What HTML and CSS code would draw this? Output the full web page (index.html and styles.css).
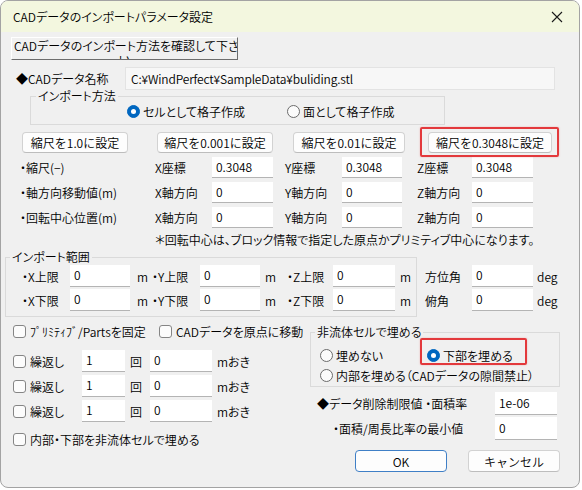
FILE: index.html
```html
<!DOCTYPE html>
<html lang="ja">
<head>
<meta charset="utf-8">
<title>CADデータのインポートパラメータ設定</title>
<link rel="stylesheet" href="styles.css">
</head>
<body>
<div class="dialog">
  <div class="titlebar">
    <span class="title">CADデータのインポートパラメータ設定</span>
    <svg class="close" width="12" height="12" viewBox="0 0 12 12"><path d="M1 1L11 11M11 1L1 11" stroke="#1a1a1a" stroke-width="1.1" fill="none"/></svg>
  </div>
  <div class="client">
    <div class="classic" role="button">CADデータのインポート方法を確認して下さ<br>い</div>

    <div class="name-row">
      <span class="name-lbl">◆CADデータ名称</span>
      <div class="readonly">C:¥WindPerfect¥SampleData¥buliding.stl</div>
    </div>

    <fieldset class="method">
      <legend>インポート方法</legend>
      <div class="radio-line">
        <label class="radio r-cell"><span class="rb on"></span>セルとして格子作成</label>
        <label class="radio"><span class="rb"></span>面として格子作成</label>
      </div>
    </fieldset>

    <div class="btn-row">
      <button class="btn b1">縮尺を1.0に設定</button>
      <button class="btn b2">縮尺を0.001に設定</button>
      <button class="btn b3">縮尺を0.01に設定</button>
      <div class="hl"><button class="btn b4">縮尺を0.3048に設定</button></div>
    </div>

    <div class="xyz">
      <span>・縮尺(−)</span><span>X座標</span><input class="edit" value="0.3048"><span class="yl">Y座標</span><input class="edit" value="0.3048"><span class="zl">Z座標</span><input class="edit" value="0.3048">
      <span>・軸方向移動値(m)</span><span>X軸方向</span><input class="edit" value="0"><span class="yl">Y軸方向</span><input class="edit" value="0"><span class="zl">Z軸方向</span><input class="edit" value="0">
      <span>・回転中心位置(m)</span><span>X軸方向</span><input class="edit" value="0"><span class="yl">Y軸方向</span><input class="edit" value="0"><span class="zl">Z軸方向</span><input class="edit" value="0">
    </div>

    <p class="note">＊回転中心は、ブロック情報で指定した原点かプリミティブ中心になります。</p>

    <div class="range-row">
      <fieldset class="range">
        <legend>インポート範囲</legend>
        <div class="range-grid">
          <span>・X上限</span><input class="edit" value="0"><span class="unit">m</span>
          <span>・Y上限</span><input class="edit" value="0"><span class="unit2">m</span>
          <span>・Z上限</span><input class="edit" value="0"><span class="unit2">m</span>
          <span>・X下限</span><input class="edit" value="0"><span class="unit">m</span>
          <span>・Y下限</span><input class="edit" value="0"><span class="unit2">m</span>
          <span>・Z下限</span><input class="edit" value="0"><span class="unit2">m</span>
        </div>
      </fieldset>
      <div class="angles">
        <span>方位角</span><input class="edit" value="0"><span class="deg">deg</span>
        <span>俯角</span><input class="edit" value="0"><span class="deg">deg</span>
      </div>
    </div>

    <div class="lower">
      <div class="left">
        <div class="cb-row">
          <label class="check c1"><span class="cb"></span>ﾌﾟﾘﾐﾃｨﾌﾞ/Partsを固定</label>
          <label class="check c2"><span class="cb"></span>CADデータを原点に移動</label>
        </div>
        <div class="rep">
          <label class="check"><span class="cb"></span>繰返し</label><input class="edit" value="1"><span class="kai">回</span><input class="edit" value="0"><span class="unit">mおき</span>
          <label class="check"><span class="cb"></span>繰返し</label><input class="edit" value="1"><span class="kai">回</span><input class="edit" value="0"><span class="unit">mおき</span>
          <label class="check"><span class="cb"></span>繰返し</label><input class="edit" value="1"><span class="kai">回</span><input class="edit" value="0"><span class="unit">mおき</span>
        </div>
        <label class="check last"><span class="cb"></span>内部・下部を非流体セルで埋める</label>
      </div>

      <div class="right">
        <fieldset class="nonfluid">
          <legend>非流体セルで埋める</legend>
          <div class="radio-line nf1">
            <label class="radio r-none"><span class="rb"></span>埋めない</label>
            <label class="radio r-bottom"><span class="rb on"></span>下部を埋める</label>
          </div>
          <div class="radio-line nf2">
            <label class="radio"><span class="rb"></span>内部を埋める（CADデータの隙間禁止）</label>
          </div>
        </fieldset>
        <div class="del">
          <span class="d1">◆データ削除制限値 ・面積率</span><input class="edit" value="1e-06">
          <span class="d2">・面積/周長比率の最小値</span><input class="edit" value="0">
        </div>
        <div class="dlg-btns">
          <button class="btn ok">OK</button>
          <button class="btn cancel">キャンセル</button>
        </div>
      </div>
    </div>
  </div>
</div>
</body>
</html>
```
FILE: styles.css
```css
* { box-sizing: border-box; }
html, body { margin: 0; padding: 0; background: #ffffff; }
body {
  font-family: "Noto Sans CJK JP", "Noto Sans", sans-serif;
  font-size: 12px;
  font-weight: 350;
  color: #000;
  font-feature-settings: "palt";
}
.dialog {
  width: 580px;
  height: 488px;
  border: 1px solid #a3a3a3;
  border-radius: 8px;
  overflow: hidden;
  display: flex;
  flex-direction: column;
  background: #f0f0f0;
}
.titlebar {
  height: 31px;
  flex: none;
  background: #f3f7df;
  display: flex;
  align-items: center;
  padding-left: 12px;
}
.close { margin-left: auto; margin-right: 16px; }
.client { flex: 1; }

.classic {
  margin: 5px 0 0 10px;
  width: 227px;
  height: 23px;
  padding: 1px 2px 0;
  border: 1px solid;
  border-color: #ffffff #6d6d6d #6d6d6d #ffffff;
  background: #f0f0f0;
  line-height: 14px;
  text-align: center;
  overflow: hidden;
  white-space: nowrap;
}

.name-row { display: flex; align-items: center; margin: 7px 0 0 15px; height: 23px; }
.name-lbl { width: 109px; }
.readonly {
  width: 430px;
  height: 23px;
  background: #f7f7f7;
  border: 1px solid #e3e3e3;
  padding-left: 5px;
  line-height: 21px;
  white-space: nowrap;
  letter-spacing: -0.15px;
}

fieldset { border: 1px solid #dadada; margin: 0; padding: 0; min-width: 0; }
legend { line-height: 14px; padding: 0 2px; }

.method { margin: -1px 0 0 29px; width: 415px; padding-bottom: 5px; }
.method legend { margin-left: 5px; }
.radio-line { display: flex; height: 16px; align-items: center; }
.method .radio-line { padding-left: 96px; }
.radio { display: inline-flex; align-items: center; white-space: nowrap; height: 16px; }
.r-cell { width: 160px; }
.rb {
  width: 13px; height: 13px; flex: none;
  border: 1px solid #6b6b6b;
  border-radius: 50%;
  background: #fbfbfb;
  margin-right: 3px;
  position: relative;
}
.rb.on { background: #0067c0; border-color: #0067c0; }
.rb.on::after {
  content: ""; position: absolute; left: 3px; top: 3px; width: 5px; height: 5px;
  border-radius: 50%; background: #fff;
}

.btn-row { display: flex; margin-top: 7px; height: 21px; }
.btn {
  height: 21px;
  background: #fdfdfd;
  border: 1px solid #d2d2d2;
  border-bottom-color: #bdbdbd;
  border-radius: 4px;
  font-family: inherit;
  font-size: 12px;
  font-weight: 350;
  color: #000;
  padding: 0;
  line-height: 19px;
  white-space: nowrap;
}
.b1 { margin-left: 21px; width: 106px; }
.b2 { margin-left: 29px; width: 116px; }
.b3 { margin-left: 20px; width: 112px; }
.hl { margin-left: 23px; position: relative; display: flex; }
.b4 { width: 124px; }
.hl::after {
  content: ""; position: absolute; left: -8px; right: -7px; top: -5px; bottom: -4px;
  border: 2px solid #e3393c; border-radius: 2px;
  box-shadow: 0 0 2px rgba(227,57,60,0.35);
}

.edit {
  width: 100%;
  height: 100%;
  align-self: stretch;
  border: none;
  border-bottom: 1px solid #b4b4b4;
  background: #fff;
  font-family: inherit;
  font-size: 12px;
  font-weight: 350;
  color: #000;
  padding: 0 0 2px 4px;
  margin: 0;
  outline: none;
}

.xyz {
  display: grid;
  grid-template-columns: 135px 57px 61px 69px 60px 70px 61px;
  grid-auto-rows: 21px;
  row-gap: 4px;
  margin: 4px 0 0 19px;
  align-items: center;
  white-space: nowrap;
}
.yl { padding-left: 12px; }
.zl { padding-left: 15px; }

.note { margin: 4px 0 0 154px; line-height: 16px; white-space: nowrap; }

.range-row { display: flex; align-items: flex-start; margin-top: 2px; }
.range { margin-left: 4px; width: 412px; padding: 1px 0 5px 0; }
.range legend { margin-left: 4px; }
.range-grid {
  display: grid;
  grid-template-columns: 48px 60px 22px 48px 60px 27px 46px 62px 1fr;
  grid-auto-rows: 22px;
  row-gap: 2px;
  padding-left: 16px;
  align-items: center;
  white-space: nowrap;
}
.unit { padding-left: 7px; }
.unit2 { padding-left: 5px; }
.angles {
  margin-left: 8px;
  padding-top: 15px;
  display: grid;
  grid-template-columns: 47px 61px auto;
  grid-auto-rows: 22px;
  row-gap: 2px;
  align-items: center;
}
.deg { padding-left: 4px; }

.lower { display: flex; margin-top: 7px; }
.left { width: 297px; margin-left: 12px; flex: none; }
.right { width: 250px; flex: none; }

.check { display: inline-flex; align-items: center; white-space: nowrap; overflow: hidden; }
.cb {
  width: 13px; height: 13px; flex: none;
  border: 1px solid #858585;
  border-radius: 3px;
  background: #fcfcfc;
  margin-right: 4px;
}
.cb-row { display: flex; height: 14px; align-items: center; }
.c1 { width: 146px; }
.c2 { width: 144px; }

.rep {
  display: grid;
  grid-template-columns: 69px 43px 25px 62px auto;
  grid-auto-rows: 22px;
  row-gap: 3px;
  margin-top: 12px;
  align-items: center;
  white-space: nowrap;
}
.kai { padding-left: 5px; }
.rep .unit { padding-left: 5px; }
.last { margin-top: 10px; height: 14px; display: flex; }

.nonfluid { width: 250px; padding: 7px 0 3px 0; }
.nonfluid legend { margin-left: 4px; line-height: 16px; }
.nonfluid .radio-line { padding-left: 9px; }
.nf2 { margin-top: 4px; }
.r-none { width: 107px; }
.r-bottom { width: 90px; position: relative; overflow: visible; }
.r-bottom::after {
  content: ""; position: absolute; left: -7px; right: -10px; top: -9px; bottom: -2px;
  border: 2px solid #e3393c; border-radius: 2px;
  box-shadow: 0 0 2px rgba(227,57,60,0.35);
}

.del {
  display: grid;
  grid-template-columns: 185px 62px;
  grid-auto-rows: 23px;
  row-gap: 2px;
  margin-top: 5px;
  align-items: center;
  white-space: nowrap;
}
.d1 { padding-left: 7px; }
.d2 { padding-left: 23px; }

.dlg-btns { display: flex; margin-top: 10px; }
.ok { margin-left: 45px; width: 92px; height: 22px; border-color: #3f7fc6; }
.cancel { margin-left: 21px; width: 92px; height: 22px; }
```
